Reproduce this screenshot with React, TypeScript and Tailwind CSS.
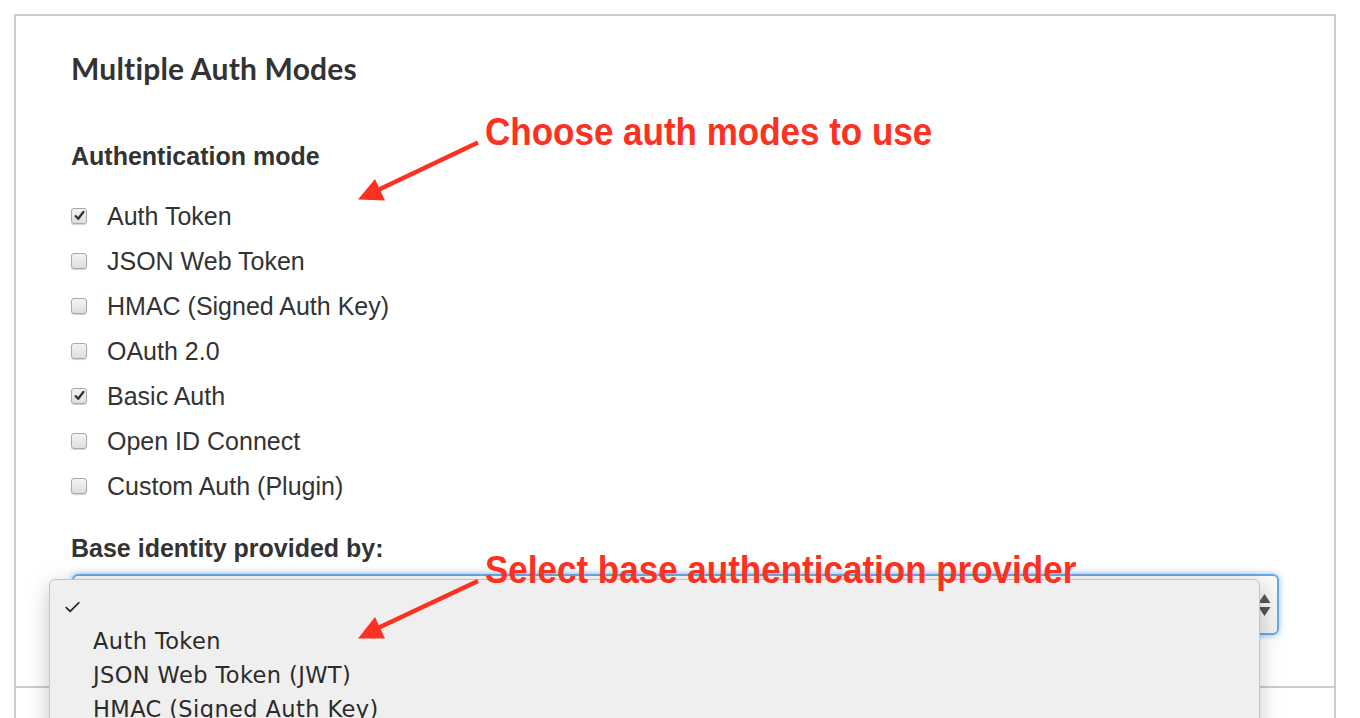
import { Check } from "lucide-react";

const modes = [
    { label: "Auth Token", checked: true },
    { label: "JSON Web Token", checked: false },
    { label: "HMAC (Signed Auth Key)", checked: false },
    { label: "OAuth 2.0", checked: false },
    { label: "Basic Auth", checked: true },
    { label: "Open ID Connect", checked: false },
    { label: "Custom Auth (Plugin)", checked: false },
];

const options = ["", "Auth Token", "JSON Web Token (JWT)", "HMAC (Signed Auth Key)"];

const CheckBox = ({ checked }: { checked: boolean }) => (
    <span className="flex h-[16px] w-[16px] shrink-0 items-center justify-center rounded-[3px] border border-[#a9a9a9] bg-linear-to-b from-[#f4f4f4] to-[#dedede] shadow-[0_1px_1px_rgba(0,0,0,0.18)]">
        {checked && (
            <svg width="11" height="11" viewBox="0 0 11 11">
                <path d="M1.8 6.2 L4.2 8.8 L9.4 2" fill="none" stroke="#333" strokeWidth="2.3" strokeLinecap="round" strokeLinejoin="round" />
            </svg>
        )}
    </span>
);

const Arrows = () => (
    <svg className="pointer-events-none absolute inset-0" width="1360" height="718">
        <line x1="478" y1="142.5" x2="378" y2="190" stroke="#fc3121" strokeWidth="4.5" />
        <polygon points="375,179 358,199.5 385,200.5" fill="#fc3121" />
        <line x1="478" y1="581" x2="378" y2="628" stroke="#fc3121" strokeWidth="4.5" />
        <polygon points="375,617 358,638.5 385,638.5" fill="#fc3121" />
    </svg>
);

export default function App() {
    return (
        <div className="relative h-[718px] w-[1360px] overflow-hidden bg-white text-[#333]" style={{ fontFamily: "'Liberation Sans', Arial, sans-serif" }}>
            <div className="pl-[14px] pt-[14px]">
                {/* Main panel */}
                <div className="h-[674px] w-[1322px] border-2 border-[#cccccc] px-[55px] pt-[34px]">
                    <h2 className="text-[30px] leading-[36px] font-bold tracking-[0.2px] text-[#333]" style={{ fontFamily: "Lato, 'Open Sans', sans-serif" }}>
                        Multiple Auth Modes
                    </h2>

                    <div className="mt-[55px] text-[25px] leading-[30px] font-bold">Authentication mode</div>

                    <div className="mt-[22px] flex flex-col">
                        {modes.map(m => (
                            <label key={m.label} className="flex h-[45px] items-center">
                                <CheckBox checked={m.checked} />
                                <span className="ml-[20px] text-[25px] leading-[30px]">{m.label}</span>
                            </label>
                        ))}
                    </div>

                    <div className="mt-[25px] text-[25px] leading-[30px] font-bold">Base identity provided by:</div>

                    <div className="mt-[11px] ml-[1px] flex h-[61px] items-center justify-end rounded-[6px] border-2 border-[#6aa8e2] bg-linear-to-b from-[#fafafa] to-[#f0f0f0] pr-[6px] shadow-[0_0_6px_rgba(90,160,230,0.7)]">
                        <svg width="13" height="24" viewBox="0 0 13 24">
                            <polygon points="6.5,1 12.5,10 0.5,10" fill="#555" />
                            <polygon points="0.5,14 12.5,14 6.5,23" fill="#555" />
                        </svg>
                    </div>
                </div>

                {/* Next panel */}
                <div className="h-[40px] w-[1322px] border-x-2 border-[#cccccc]" />
            </div>

            {/* Open select menu */}
            <div className="absolute left-[49px] top-[579px] h-[160px] w-[1211px] rounded-t-[6px] border border-[#c4c4c4] bg-[#efefef] pt-[10px] shadow-[0_6px_22px_rgba(0,0,0,0.22)]" style={{ fontFamily: "'DejaVu Sans', Verdana, sans-serif" }}>
                {options.map((o, i) => (
                    <div key={i} className="relative flex h-[34px] items-center pl-[43px] text-[22.5px] leading-[34px] tracking-[0.4px] text-[#2b2b2b]">
                        {i === 0 && <Check className="absolute left-[13px] top-[8px]" size={19} strokeWidth={2.2} color="#222" />}
                        {o}
                    </div>
                ))}
            </div>

            <Arrows />

            {/* Annotations */}
            <div className="absolute left-[485px] top-[110px] origin-top-left scale-y-110 text-[35px] leading-[40px] font-bold text-[#fc3121]">
                Choose auth modes to use
            </div>
            <div className="absolute left-[485px] top-[548px] origin-top-left scale-y-110 text-[35px] leading-[40px] font-bold text-[#fc3121]">
                Select base authentication provider
            </div>
        </div>
    );
}
